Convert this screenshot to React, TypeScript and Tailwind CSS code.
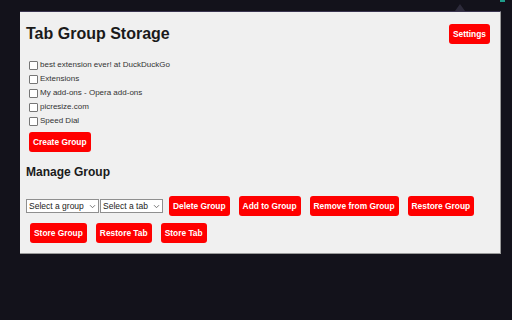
import React from "react";

const tabs = [
  "best extension ever! at DuckDuckGo",
  "Extensions",
  "My add-ons - Opera add-ons",
  "picresize.com",
  "Speed Dial",
];

function RedButton({ label, className = "" }: { label: string; className?: string }) {
  return (
    <button
      type="button"
      className={`h-[20px] px-[4px] rounded-[3px] bg-[#ff0000] text-white text-[8.4px] font-bold leading-none whitespace-nowrap ${className}`}
    >
      {label}
    </button>
  );
}

function FakeSelect({ label, width }: { label: string; width: string }) {
  return (
    <div
      className={`${width} h-[14px] flex items-center justify-between bg-white border border-[#8f8f8f] pl-[2px] pr-[2px] text-[8.5px] text-[#222] leading-none`}
    >
      <span className="whitespace-nowrap">{label}</span>
      <svg width="7" height="5" viewBox="0 0 7 5" className="shrink-0">
        <path d="M1 1.2 L3.5 3.7 L6 1.2" fill="none" stroke="#666" strokeWidth="0.9" />
      </svg>
    </div>
  );
}

export default function App() {
  return (
    <div
      className="relative w-[512px] h-[320px] bg-[#13121b] pt-[11px] pl-[20px] overflow-hidden"
      style={{ fontFamily: '"Liberation Sans", Arial, sans-serif' }}
    >
      {/* popup arrow + toolbar hint */}
      <div className="absolute left-[455px] top-[4px] w-0 h-0 border-l-[5px] border-r-[5px] border-b-[7px] border-l-transparent border-r-transparent border-b-[#2c2a3a]" />
      <div className="absolute left-[500px] top-0 w-[5px] h-[2px] bg-[#1f9c8a]" />

      <div className="w-[481px] h-[243px] bg-[#f0f0f0] border-t border-[#3a3450] border-r border-r-[#9a9a9a] border-b border-b-[#9a9a9a] pl-[6px] pr-[10px]">
        <div className="flex items-center justify-between mt-[12px]">
          <h1 className="text-[16px] leading-[18px] font-bold text-[#1a1a1a]">Tab Group Storage</h1>
          <RedButton label="Settings" />
        </div>

        <div className="mt-[14px] flex flex-col">
          {tabs.map((t) => (
            <label key={t} className="h-[14px] flex items-center text-[8px] text-[#333]">
              <span className="ml-[3px] mr-[2px] w-[9px] h-[9px] bg-white border border-[#767676] rounded-[1px]" />
              {t}
            </label>
          ))}
        </div>

        <RedButton label="Create Group" className="ml-[3px]" />

        <h2 className="mt-[13px] text-[12px] leading-[14px] font-bold text-[#1a1a1a]">Manage Group</h2>

        <div className="mt-[17px] flex items-center">
          <FakeSelect label="Select a group" width="w-[73px]" />
          <FakeSelect label="Select a tab" width="w-[63px] ml-[1px]" />
          <div className="ml-[6px] flex gap-[9px]">
            <RedButton label="Delete Group" />
            <RedButton label="Add to Group" />
            <RedButton label="Remove from Group" />
            <RedButton label="Restore Group" />
          </div>
        </div>

        <div className="mt-[7px] ml-[4px] flex gap-[9px]">
          <RedButton label="Store Group" />
          <RedButton label="Restore Tab" />
          <RedButton label="Store Tab" />
        </div>
      </div>
    </div>
  );
}
